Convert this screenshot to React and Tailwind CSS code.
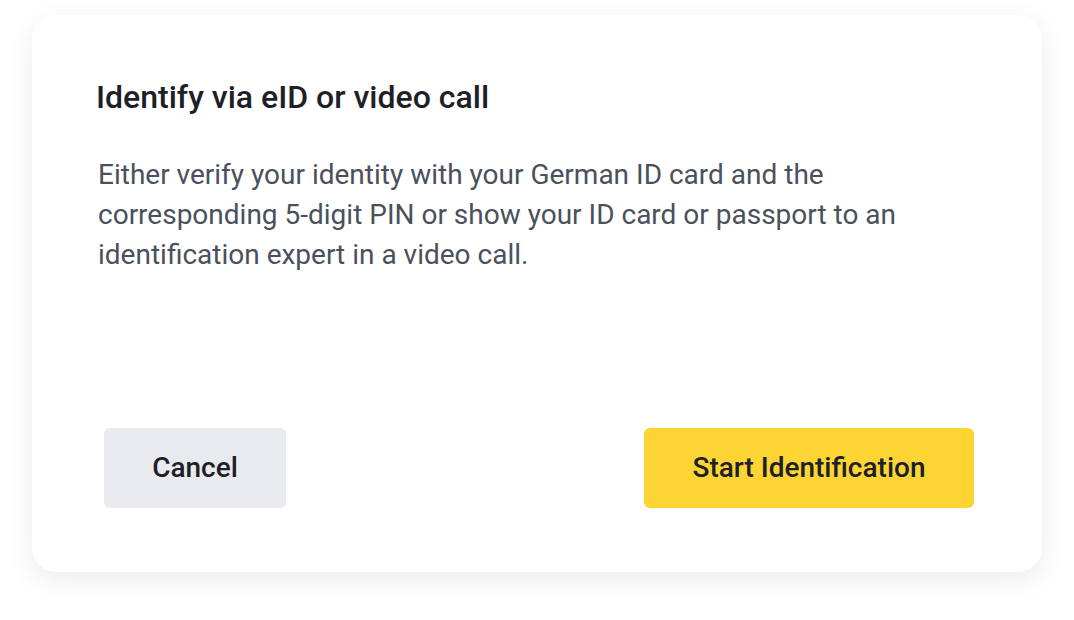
export default function App() {
  return (
    <div className="min-h-screen bg-white px-[32px] pt-[15px]" style={{ fontFamily: 'Roboto, "Liberation Sans", sans-serif' }}>
      <div className="w-[1010px] h-[557px] bg-white rounded-[24px] shadow-[0_8px_28px_rgba(0,0,0,0.08)] flex flex-col pl-[64px] pr-[68px] pt-[62px] pb-[64px]">
        <h1 className="text-[32px] leading-[40px] font-medium text-[#1d2127]">Identify via eID or video call</h1>
        <p className="mt-[38px] text-[28px] leading-[40px] text-[#4a515c] pl-[2px]">
          Either verify your identity with your German ID card and the corresponding 5-digit PIN or show your ID card or passport to an identification expert in a video call.
        </p>
        <div className="mt-auto flex justify-between pl-[8px]">
          <button className="w-[182px] h-[80px] rounded-[6px] bg-[#e9eaee] text-[28px] font-medium text-[#1d2127]">Cancel</button>
          <button className="w-[330px] h-[80px] rounded-[6px] bg-[#fcd535] text-[28px] font-medium text-[#1d2127]">Start Identification</button>
        </div>
      </div>
    </div>
  )
}
